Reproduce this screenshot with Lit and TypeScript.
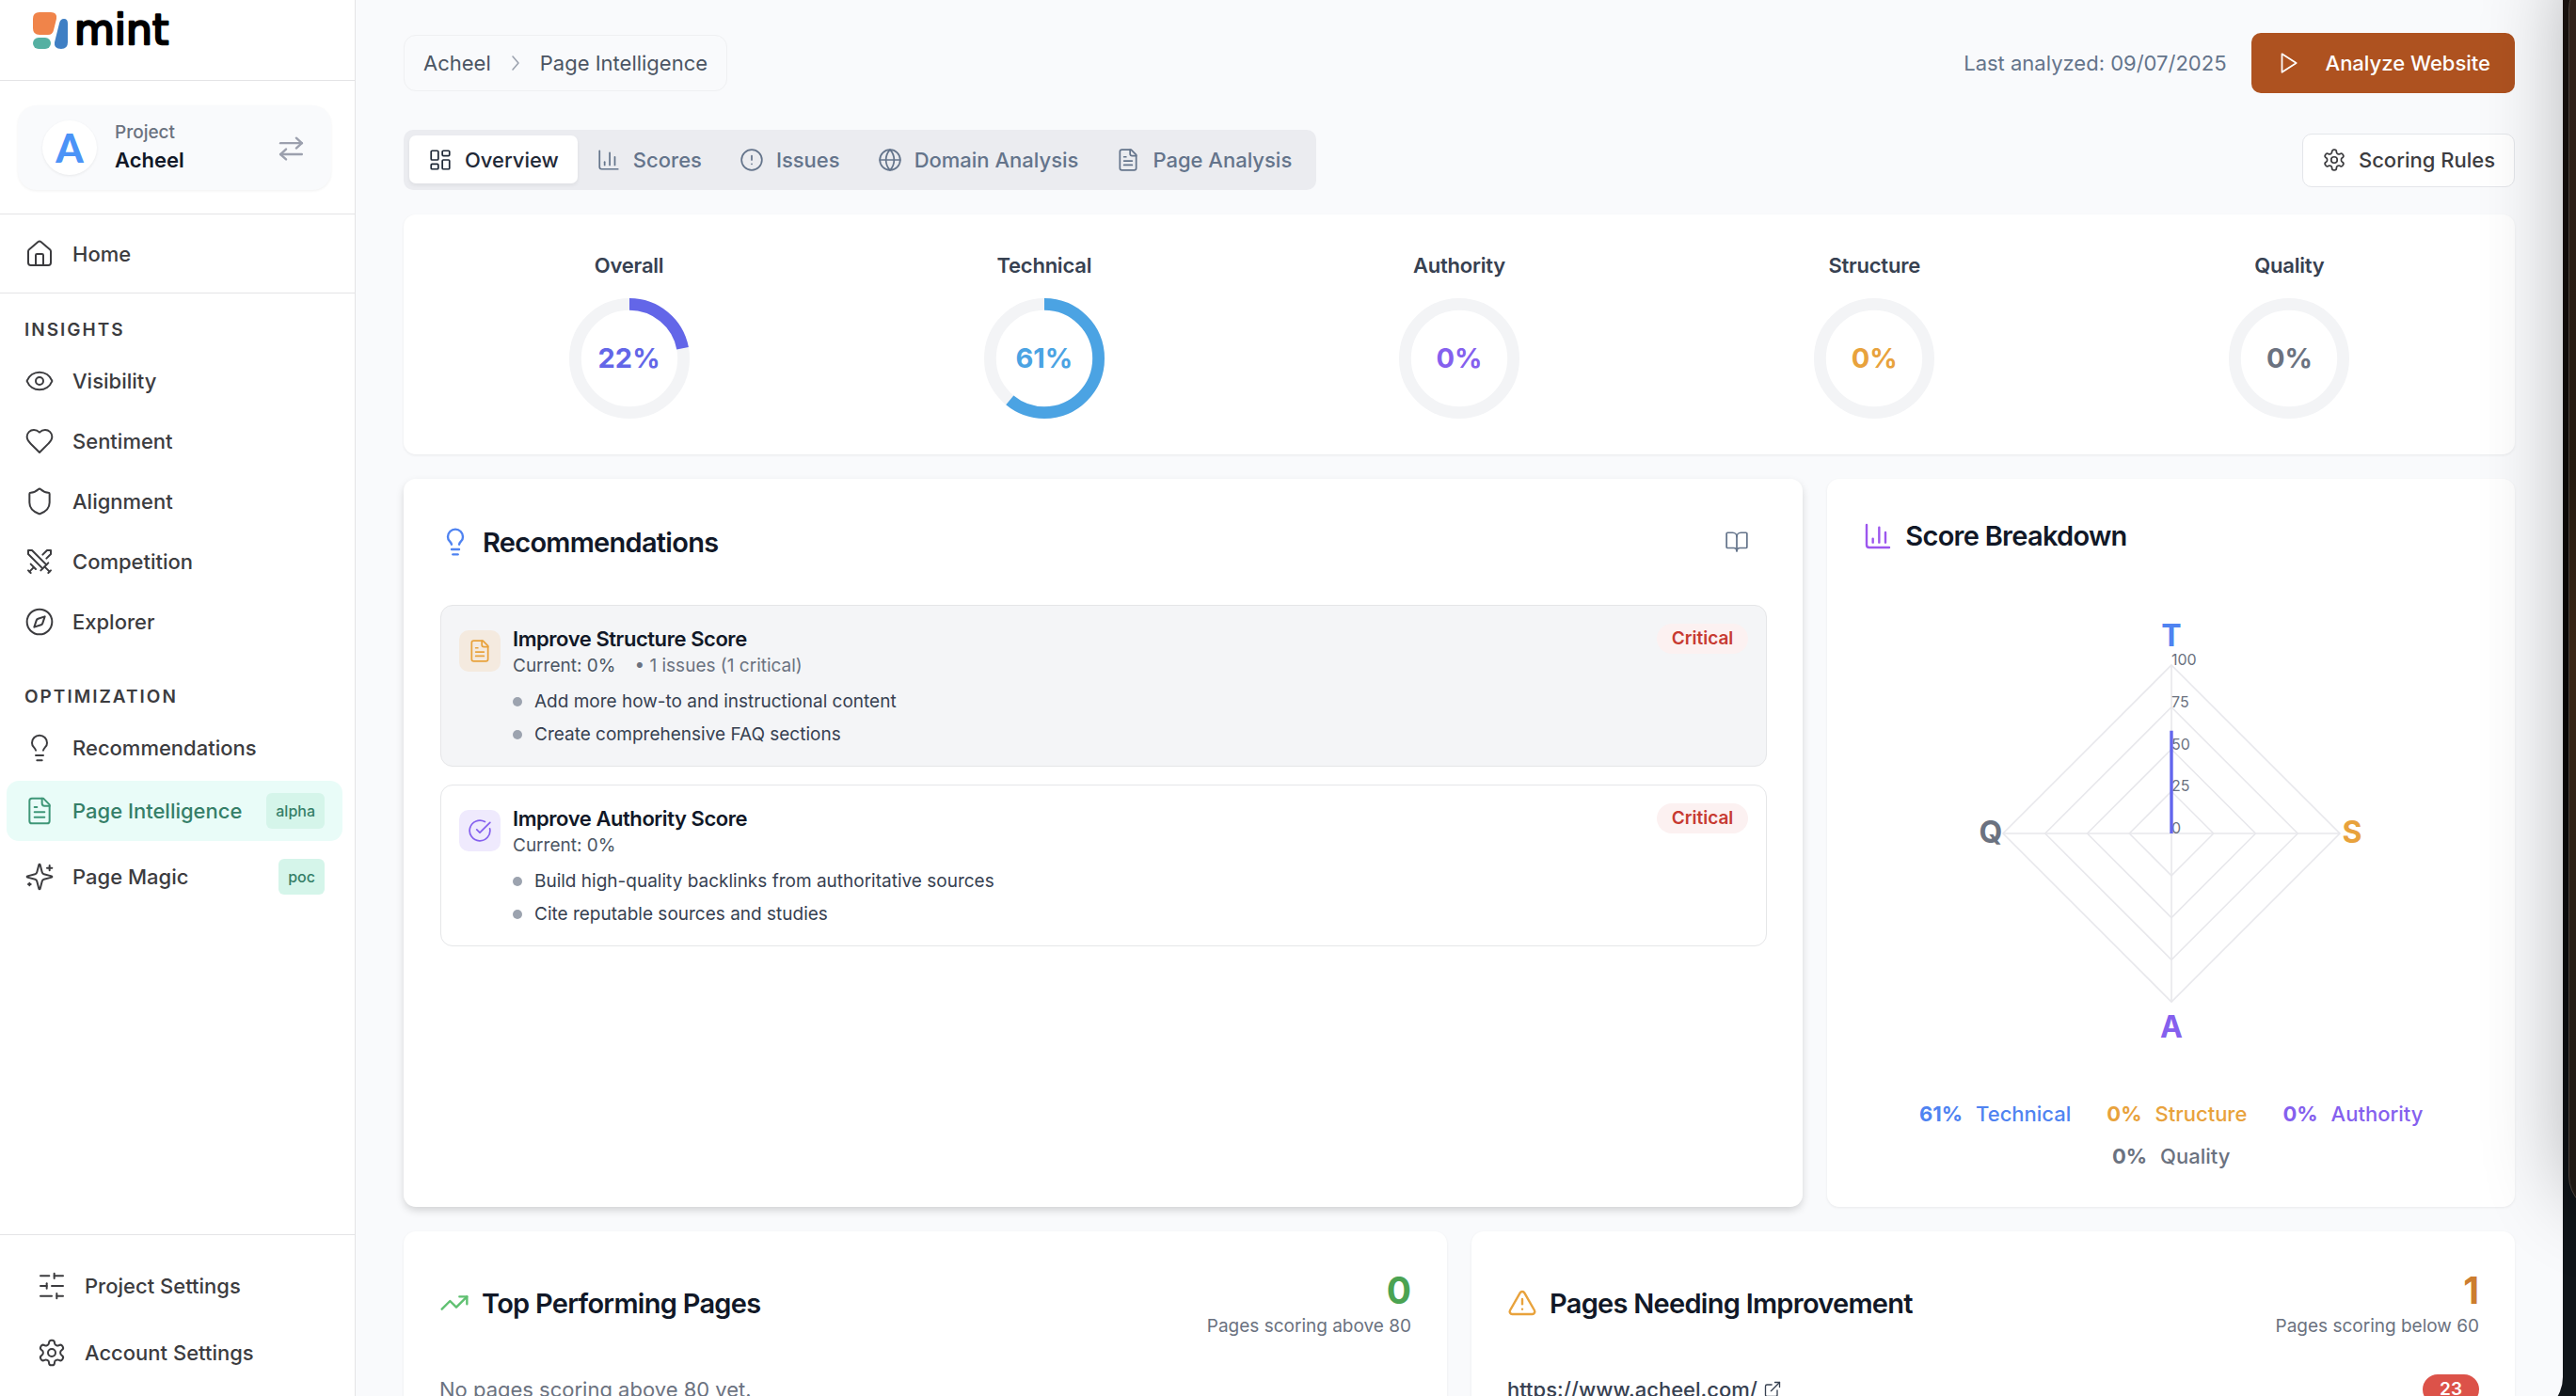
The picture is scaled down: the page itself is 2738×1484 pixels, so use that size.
import { LitElement, html, css, svg, nothing } from "lit";
import { customElement, property } from "lit/decorators.js";
import { classMap } from "lit/directives/class-map.js";

const ICONS: Record<string, string[]> = {
  home: [
    "M15 21v-8a1 1 0 0 0-1-1h-4a1 1 0 0 0-1 1v8",
    "M3 10a2 2 0 0 1 .709-1.528l7-5.999a2 2 0 0 1 2.582 0l7 5.999A2 2 0 0 1 21 10v9a2 2 0 0 1-2 2H5a2 2 0 0 1-2-2z",
  ],
  eye: [
    "M2.062 12.348a1 1 0 0 1 0-.696 10.75 10.75 0 0 1 19.876 0 1 1 0 0 1 0 .696 10.75 10.75 0 0 1-19.876 0",
    "M15 12a3 3 0 1 1-6 0 3 3 0 0 1 6 0z",
  ],
  heart: [
    "M19 14c1.49-1.46 3-3.21 3-5.5A5.5 5.5 0 0 0 16.5 3c-1.76 0-3 .5-4.5 2-1.5-1.5-2.74-2-4.5-2A5.5 5.5 0 0 0 2 8.5c0 2.3 1.5 4.05 3 5.5l7 7Z",
  ],
  shield: [
    "M20 13c0 5-3.5 7.5-7.66 8.95a1 1 0 0 1-.67-.01C7.5 20.5 4 18 4 13V6a1 1 0 0 1 1-1c2 0 4.5-1.2 6.24-2.72a1.17 1.17 0 0 1 1.52 0C14.51 3.81 17 5 19 5a1 1 0 0 1 1 1z",
  ],
  swords: [
    "M14.5 17.5 3 6V3h3l11.5 11.5",
    "M13 19l6-6",
    "M16 16l4 4",
    "M19 21l2-2",
    "M14.5 6.5 18 3h3v3l-3.5 3.5",
    "M5 14l4 4",
    "M7 17l-3 3",
    "M3 19l2 2",
  ],
  compass: [
    "M22 12a10 10 0 1 1-20 0 10 10 0 0 1 20 0z",
    "m16.24 7.76-1.804 5.411a2 2 0 0 1-1.265 1.265L7.76 16.24l1.804-5.411a2 2 0 0 1 1.265-1.265z",
  ],
  bulb: [
    "M15 14c.2-1 .7-1.7 1.5-2.5 1-.9 1.5-2.2 1.5-3.5A6 6 0 0 0 6 8c0 1 .2 2.2 1.5 3.5.7.7 1.3 1.5 1.5 2.5",
    "M9 18h6",
    "M10 22h4",
  ],
  file: [
    "M15 2H6a2 2 0 0 0-2 2v16a2 2 0 0 0 2 2h12a2 2 0 0 0 2-2V7Z",
    "M14 2v4a2 2 0 0 0 2 2h4",
    "M10 9H8",
    "M16 13H8",
    "M16 17H8",
  ],
  sparkles: [
    "M9.937 15.5A2 2 0 0 0 8.5 14.063l-6.135-1.582a.5.5 0 0 1 0-.962L8.5 9.936A2 2 0 0 0 9.937 8.5l1.582-6.135a.5.5 0 0 1 .963 0L14.063 8.5A2 2 0 0 0 15.5 9.937l6.135 1.581a.5.5 0 0 1 0 .964L15.5 14.063a2 2 0 0 0-1.437 1.437l-1.582 6.135a.5.5 0 0 1-.963 0z",
    "M20 3v4",
    "M22 5h-4",
    "M4 17v2",
    "M5 18H3",
  ],
  sliders: [
    "M21 4h-7",
    "M10 4H3",
    "M21 12h-9",
    "M8 12H3",
    "M21 20h-5",
    "M12 20H3",
    "M14 2v4",
    "M8 10v4",
    "M16 18v4",
  ],
  settings: [
    "M12.22 2h-.44a2 2 0 0 0-2 2v.18a2 2 0 0 1-1 1.73l-.43.25a2 2 0 0 1-2 0l-.15-.08a2 2 0 0 0-2.73.73l-.22.38a2 2 0 0 0 .73 2.73l.15.1a2 2 0 0 1 1 1.72v.51a2 2 0 0 1-1 1.74l-.15.09a2 2 0 0 0-.73 2.73l.22.38a2 2 0 0 0 2.73.73l.15-.08a2 2 0 0 1 2 0l.43.25a2 2 0 0 1 1 1.73V20a2 2 0 0 0 2 2h.44a2 2 0 0 0 2-2v-.18a2 2 0 0 1 1-1.73l.43-.25a2 2 0 0 1 2 0l.15.08a2 2 0 0 0 2.73-.73l.22-.39a2 2 0 0 0-.73-2.73l-.15-.08a2 2 0 0 1-1-1.74v-.5a2 2 0 0 1 1-1.74l.15-.09a2 2 0 0 0 .73-2.73l-.22-.38a2 2 0 0 0-2.73-.73l-.15.08a2 2 0 0 1-2 0l-.43-.25a2 2 0 0 1-1-1.73V4a2 2 0 0 0-2-2z",
    "M15 12a3 3 0 1 1-6 0 3 3 0 0 1 6 0z",
  ],
  swap: ["M1 7.5h21", "m16.5 2.5 5.5 5-5.5 5", "M22 18.5H1", "m6.5 13.5-5.5 5 5.5 5"],
  chevron: ["m9 5 6 7-6 7"],
  play: ["M6 3l14 9-14 9V3z"],
  dashboard: [
    "M4 3h5a1 1 0 0 1 1 1v7a1 1 0 0 1-1 1H4a1 1 0 0 1-1-1V4a1 1 0 0 1 1-1z",
    "M15 3h5a1 1 0 0 1 1 1v3a1 1 0 0 1-1 1h-5a1 1 0 0 1-1-1V4a1 1 0 0 1 1-1z",
    "M15 12h5a1 1 0 0 1 1 1v7a1 1 0 0 1-1 1h-5a1 1 0 0 1-1-1v-7a1 1 0 0 1 1-1z",
    "M4 16h5a1 1 0 0 1 1 1v3a1 1 0 0 1-1 1H4a1 1 0 0 1-1-1v-3a1 1 0 0 1 1-1z",
  ],
  chart: ["M3 3v16a2 2 0 0 0 2 2h16", "M18 17V9", "M13 17V5", "M8 17v-3"],
  alert: ["M22 12a10 10 0 1 1-20 0 10 10 0 0 1 20 0z", "M12 8v4", "M12 16h.01"],
  globe: [
    "M22 12a10 10 0 1 1-20 0 10 10 0 0 1 20 0z",
    "M12 2a14.5 14.5 0 0 0 0 20 14.5 14.5 0 0 0 0-20",
    "M2 12h20",
  ],
  book: [
    "M12 7v14",
    "M3 18a1 1 0 0 1-1-1V4a1 1 0 0 1 1-1h5a4 4 0 0 1 4 4 4 4 0 0 1 4-4h5a1 1 0 0 1 1 1v13a1 1 0 0 1-1 1h-6a3 3 0 0 0-3 3 3 3 0 0 0-3-3z",
  ],
  check: ["M21.801 10A10 10 0 1 1 17 3.335", "m9 11 3 3L22 4"],
  trend: ["M22 7l-8.5 8.5-5-5L2 17", "M16 7h6v6"],
  warning: [
    "m21.73 18-8-14a2 2 0 0 0-3.48 0l-8 14A2 2 0 0 0 4 21h16a2 2 0 0 0 1.73-3",
    "M12 9v4",
    "M12 17h.01",
  ],
  external: ["M15 3h6v6", "M10 14 21 3", "M18 13v6a2 2 0 0 1-2 2H5a2 2 0 0 1-2-2V8a2 2 0 0 1 2-2h6"],
};

@customElement("line-icon")
class LineIcon extends LitElement {
  @property() name = "home";
  static styles = css`
    :host { display: inline-flex; flex: none; width: 26px; height: 26px; }
    .icon { width: 100%; height: 100%; fill: none; stroke: currentColor; stroke-width: var(--stroke, 1.6); stroke-linecap: round; stroke-linejoin: round; overflow: visible; }
  `;
  render() {
    return html`<svg class="icon" viewBox="0 0 24 24" aria-hidden="true">${(ICONS[this.name] ?? []).map((d) => svg`<path d=${d}></path>`)}</svg>`;
  }
}

interface NavItem { icon: string; label: string; badge?: string; active?: boolean }

const INSIGHTS: NavItem[] = [
  { icon: "eye", label: "Visibility" },
  { icon: "heart", label: "Sentiment" },
  { icon: "shield", label: "Alignment" },
  { icon: "swords", label: "Competition" },
  { icon: "compass", label: "Explorer" },
];
const OPTIMIZATION: NavItem[] = [
  { icon: "bulb", label: "Recommendations" },
  { icon: "file", label: "Page Intelligence", badge: "alpha", active: true },
  { icon: "sparkles", label: "Page Magic", badge: "poc" },
];
const SETTINGS: NavItem[] = [
  { icon: "sliders", label: "Project Settings" },
  { icon: "settings", label: "Account Settings" },
];

@customElement("side-nav")
class SideNav extends LitElement {
  static styles = css`
    :host { display: flex; flex-direction: column; width: 377px; flex: none; height: 100vh; background: #fff; border-right: 1px solid #e4e4e6; color: #3c3c3f; font-size: 22px; line-height: 32px; font-weight: 500; }
    .brand { display: flex; align-items: flex-start; height: 72px; padding: 13px 35px 0; border-bottom: 1px solid #e4e4e6; }
    .brand-art { display: block; width: 156px; height: 42px; overflow: visible; }
    .wordmark { font: 400 44px "DejaVu Sans", sans-serif; fill: #000; stroke: #000; stroke-width: 2.4; stroke-linejoin: round; }
    .project { padding: 26px 25px 25px 19px; border-bottom: 1px solid #e4e4e6; }
    .switcher { display: flex; align-items: center; gap: 19px; width: 100%; height: 90px; padding: 0 29px 0 26px; border: 0; border-radius: 20px; background: #f9fafc; box-shadow: 0 1px 3px rgba(0, 0, 0, 0.06); font: inherit; text-align: left; box-sizing: border-box; }
    .avatar { display: grid; place-items: center; width: 58px; height: 58px; border-radius: 50%; background: #fff; box-shadow: 0 1px 3px rgba(0, 0, 0, 0.07); color: #4b93f7; font: 900 42px/58px Lato, sans-serif; }
    .names { display: flex; flex-direction: column; flex: 1; }
    .kind { color: #6b7280; font-size: 19px; line-height: 26px; }
    .name { color: #111827; font-weight: 600; line-height: 32px; }
    .swap { color: #9ca0ae; width: 26px; height: 26px; --stroke: 2.2; }
    .home { padding: 13px 13px 12px 7px; border-bottom: 1px solid #e4e4e6; }
    .section { display: flex; flex-direction: column; gap: 6px; padding: 0 13px 0 7px; }
    .label { margin: 0 0 6px; padding-left: 19px; font-size: 19px; line-height: 26px; font-weight: 600; letter-spacing: 2px; }
    .insights { padding-top: 26px; }
    .optimization { padding-top: 38px; }
    .row { display: flex; align-items: center; gap: 19px; padding: 13px 19px; border-radius: 13px; color: inherit; text-decoration: none; }
    .row line-icon { width: 32px; height: 32px; --stroke: 1.5; }
    .text { flex: 1; white-space: nowrap; }
    .active { background: #e9fcf8; color: #357f68; }
    .active line-icon { color: #3f9778; }
    .badge { padding: 6px 10px; border-radius: 6px; background: #d5f5ea; color: #357f68; font-size: 16px; line-height: 26px; }
    .footer { display: flex; flex-direction: column; gap: 13px; margin-top: auto; padding: 25px 20px 17px; border-top: 1px solid #e4e4e6; }
  `;
  private row(item: NavItem) {
    return html`<a class=${classMap({ row: true, active: !!item.active })} href="#" aria-current=${item.active ? "page" : nothing}>
      <line-icon name=${item.icon}></line-icon><span class="text">${item.label}</span>
      ${item.badge ? html`<span class="badge">${item.badge}</span>` : nothing}
    </a>`;
  }
  render() {
    return html`
      <div class="brand">
        <svg class="brand-art" viewBox="0 0 156 42" role="img" aria-label="mint">
          <path fill="#f0844a" d="M7 0h12q7 0 6 7l-3 12q-1 5-6 5H7q-7 0-7-7V7q0-7 7-7z"></path>
          <path fill="#3f7fc4" d="M28 12q1-5 5-5 4 0 4 5v20q0 7-7 7-8 0-7-7z"></path>
          <rect fill="#55b0a2" y="27" width="19" height="12" rx="6"></rect>
          <text class="wordmark" x="44" y="34">mint</text>
        </svg>
      </div>
      <div class="project">
        <button class="switcher" type="button">
          <span class="avatar">A</span>
          <span class="names"><span class="kind">Project</span><span class="name">Acheel</span></span>
          <line-icon class="swap" name="swap"></line-icon>
        </button>
      </div>
      <div class="home">${this.row({ icon: "home", label: "Home" })}</div>
      <nav class="section insights"><h2 class="label">INSIGHTS</h2>${INSIGHTS.map((i) => this.row(i))}</nav>
      <nav class="section optimization"><h2 class="label">OPTIMIZATION</h2>${OPTIMIZATION.map((i) => this.row(i))}</nav>
      <nav class="footer">${SETTINGS.map((i) => this.row(i))}</nav>
    `;
  }
}

@customElement("score-ring")
class ScoreRing extends LitElement {
  @property() label = "";
  @property({ type: Number }) value = 0;
  @property() color = "#000";
  static styles = css`
    :host { display: flex; flex-direction: column; align-items: center; gap: 19px; }
    .title { margin: 0; color: #374151; font-size: 22px; line-height: 32px; font-weight: 600; letter-spacing: -0.01em; }
    .ring { display: grid; place-items: center; width: 128px; height: 128px; }
    .ring > * { grid-area: 1 / 1; }
    .dial { width: 128px; height: 128px; fill: none; stroke-width: 8; }
    .track { stroke: #f3f4f6; }
    .value { font-size: 29px; line-height: 38px; font-weight: 700; }
  `;
  render() {
    return html`
      <h3 class="title">${this.label}</h3>
      <div class="ring">
        <svg class="dial" viewBox="0 0 80 80" aria-hidden="true">
          <circle class="track" cx="40" cy="40" r="36"></circle>
          ${this.value > 0
            ? svg`<circle cx="40" cy="40" r="36" pathLength="100" stroke=${this.color} stroke-dasharray="${this.value} 100" transform="rotate(-90 40 40)"></circle>`
            : nothing}
        </svg>
        <span class="value" style="color:${this.color}">${this.value}%</span>
      </div>
    `;
  }
}

@customElement("radar-chart")
class RadarChart extends LitElement {
  static styles = css`
    :host { display: flex; justify-content: center; }
    .plot { display: block; width: 654px; max-width: 100%; height: 512px; font-family: Inter, sans-serif; overflow: visible; }
    .grid { fill: none; stroke: #e8e8ec; stroke-width: 1.6; }
    .series { fill: rgba(99, 102, 241, 0.3); stroke: #6366ee; stroke-width: 3.4; }
    .tick { fill: #6b7280; font-size: 16px; }
    .axis { font-size: 32px; font-weight: 700; text-anchor: middle; }
  `;
  render() {
    const r = 179;
    const diamond = (k: number) => `M0 ${-k * r}L${k * r} 0L0 ${k * r}L${-k * r} 0Z`;
    return html`<svg class="plot" viewBox="-327 -256 654 512" role="img" aria-label="Score breakdown by category">
      ${[0.25, 0.5, 0.75, 1].map((k) => svg`<path class="grid" d=${diamond(k)}></path>`)}
      <path class="grid" d="M0 ${-r}V${r}M${-r} 0H${r}"></path>
      ${[0, 25, 50, 75, 100].map((t) => svg`<text class="tick" x="0" y=${-t * r / 100}>${t}</text>`)}
      <path class="series" d="M0 ${-0.61 * r}L0 0Z"></path>
      <text class="axis" x="0" y="-199" fill="#4f83f1">T</text>
      <text class="axis" x="192" y="10" fill="#e8a23c">S</text>
      <text class="axis" x="0" y="217" fill="#8560ee">A</text>
      <text class="axis" x="-192" y="10" fill="#6b7280">Q</text>
    </svg>`;
  }
}

const TABS = [
  { icon: "dashboard", label: "Overview", active: true },
  { icon: "chart", label: "Scores" },
  { icon: "alert", label: "Issues" },
  { icon: "globe", label: "Domain Analysis" },
  { icon: "file", label: "Page Analysis" },
];
const SCORES = [
  { label: "Overall", value: 22, color: "#6366e8" },
  { label: "Technical", value: 61, color: "#4ba3e3" },
  { label: "Authority", value: 0, color: "#8560ee" },
  { label: "Structure", value: 0, color: "#e8a23c" },
  { label: "Quality", value: 0, color: "#6b7280" },
];
const LEGEND = [
  { label: "Technical", value: 61, color: "#4f83f1" },
  { label: "Structure", value: 0, color: "#e8a23c" },
  { label: "Authority", value: 0, color: "#8560ee" },
  { label: "Quality", value: 0, color: "#6b7280" },
];
const RECOMMENDATIONS = [
  { title: "Improve Structure Score", icon: "file", tone: "amber", issues: "• 1 issues (1 critical)", hovered: true, tips: ["Add more how-to and instructional content", "Create comprehensive FAQ sections"] },
  { title: "Improve Authority Score", icon: "check", tone: "violet", issues: "", hovered: false, tips: ["Build high-quality backlinks from authoritative sources", "Cite reputable sources and studies"] },
];

@customElement("app-root")
class AppRoot extends LitElement {
  static styles = css`
    :host { display: block; font-family: Inter, "Noto Sans", sans-serif; font-size: 22px; line-height: 32px; }
    .desktop { position: relative; height: 100vh; overflow: hidden; background: linear-gradient(#1b1410, #0a0806 50%, #10161a 90%); }
    .window { display: flex; height: calc(100vh + 20px); margin-right: 14px; overflow: hidden; border-bottom-right-radius: 40px; background: #f9fafc; }
    .behind { position: absolute; left: calc(100% - 8px); top: -30px; bottom: 194px; width: 400px; box-sizing: border-box; border: 1px solid #4a423c; border-radius: 40px; background: linear-gradient(#33231c, #241a10 40%, #3a2616 55%, #261e16 80%, #1d1814); box-shadow: 0 -16px 90px rgba(0, 0, 0, 0.3); }
    .main { display: flex; flex-direction: column; flex: 1; min-width: 0; padding: 35px 51px 0; }
    .bar { display: flex; align-items: center; justify-content: space-between; }
    .crumbs { display: flex; align-items: center; gap: 14px; padding: 13px 20px; border: 1px solid #eff0f2; border-radius: 13px; color: #4b5563; }
    .crumbs a { color: inherit; text-decoration: none; }
    .crumbs line-icon { width: 24px; height: 24px; color: #9ca3af; }
    .actions { display: flex; align-items: center; gap: 26px; color: #64748b; }
    .analyze { display: flex; align-items: center; gap: 27px; height: 64px; padding: 0 26px; border: 0; border-radius: 10px; background: #ae5220; color: #fff; font: inherit; font-weight: 500; }
    .tabs-bar { margin-top: 39px; }
    .tabs { display: flex; padding: 6px 6px 7px; border-radius: 10px; background: #ebecf0; }
    .tab { display: flex; align-items: center; gap: 13px; height: 51px; padding: 0 20px; border: 0; border-radius: 7px; background: none; color: #64748b; font: inherit; font-weight: 500; }
    .selected { background: #fff; color: #1f2937; box-shadow: 0 2px 4px rgba(0, 0, 0, 0.06); }
    .rules { display: flex; align-items: center; gap: 13px; height: 57px; padding: 0 20px; border: 1px solid #e4e6ea; border-radius: 10px; background: #fff; color: #3c3c3f; font: inherit; font-weight: 500; }
    .card { border-radius: 13px; background: #fff; box-shadow: 0 1px 3px rgba(0, 0, 0, 0.07); padding: 38px; }
    .scores { display: grid; grid-template-columns: repeat(5, 1fr); gap: 38px; margin-top: 26px; }
    .middle { display: grid; grid-template-columns: repeat(3, minmax(0, 1fr)); gap: 26px; margin-top: 26px; }
    .wide { grid-column: span 2; box-shadow: 0 4px 10px -1px rgba(0, 0, 0, 0.18); padding-left: 39px; }
    .head { display: flex; align-items: center; justify-content: space-between; }
    .title { display: flex; align-items: center; gap: 13px; margin: 0; color: #111827; font-size: 29px; line-height: 45px; font-weight: 600; letter-spacing: -0.025em; }
    .title line-icon { width: 32px; height: 32px; --stroke: 1.8; }
    .blue { color: #4f83f1; }
    .purple { color: #9c56ee; }
    .green { color: #5fc071; }
    .orange { color: #e8a23c; }
    .guide { display: flex; padding: 16px 19px; border: 0; background: none; color: #64748b; }
    .recs { display: flex; flex-direction: column; gap: 19px; margin: 38px 0 0; padding: 0; list-style: none; }
    .rec { display: flex; align-items: flex-start; gap: 13px; padding: 19px; border: 1px solid #e5e6e8; border-radius: 13px; font-size: 19px; line-height: 26px; color: #4b5563; }
    .hovered { background: #f4f5f7; }
    .tile { display: grid; place-items: center; width: 44px; height: 44px; margin-top: 7px; border-radius: 10px; }
    .amber { background: #f4eadf; color: #e8a23c; }
    .violet { background: #efeafd; color: #8560ee; }
    .body { flex: 1; }
    .rec-title { margin: 0; color: #111827; font-size: 22px; line-height: 32px; font-weight: 600; letter-spacing: -0.02em; }
    .stats { display: flex; gap: 20px; }
    .issues { color: #6b7280; }
    .tips { display: flex; flex-direction: column; gap: 6px; margin: 10px 0 0; padding: 0; list-style: none; color: #374151; line-height: 29px; }
    .tip { display: flex; align-items: center; gap: 13px; }
    .tip::before { content: ""; width: 10px; height: 10px; border-radius: 50%; background: #9ca3af; }
    .critical { padding: 3px 16px; border-radius: 16px; background: #fcf1f1; color: #c73a31; font-weight: 600; }
    .chart { margin-top: 38px; }
    .legend { display: flex; flex-wrap: wrap; justify-content: center; gap: 13px 38px; margin: 26px 0 0; padding: 0; list-style: none; font-weight: 500; }
    .legend-item { display: flex; gap: 14px; }
    .percent { font-weight: 700; }
    .bottom { display: grid; grid-template-columns: repeat(2, minmax(0, 1fr)); gap: 26px; margin-top: 26px; }
    .tally { display: flex; flex-direction: column; align-items: flex-end; color: #6b7280; font-size: 19px; line-height: 26px; }
    .count { font-size: 39px; line-height: 50px; font-weight: 700; }
    .good { color: #4ba352; }
    .poor { color: #cc7d2f; }
    .bottom-row { display: flex; align-items: center; justify-content: space-between; margin: 38px 0 0; color: #6b7280; }
    .page-link { display: flex; align-items: center; gap: 6px; color: #374151; text-decoration: none; font-weight: 500; }
    .page-link line-icon { width: 20px; height: 20px; }
    .score-pill { padding: 3px 18px; border-radius: 16px; background: #dc5249; color: #fff; font-size: 19px; line-height: 26px; font-weight: 600; }
  `;
  render() {
    return html`
      <div class="desktop">
        <div class="window">
          <side-nav></side-nav>
          <main class="main">
            <header class="bar">
              <nav class="crumbs" aria-label="Breadcrumb">
                <a href="#">Acheel</a><line-icon name="chevron"></line-icon><span>Page Intelligence</span>
              </nav>
              <div class="actions">
                <span>Last analyzed: 09/07/2025</span>
                <button class="analyze" type="button"><line-icon name="play"></line-icon>Analyze Website</button>
              </div>
            </header>
            <div class="bar tabs-bar">
              <div class="tabs" role="tablist">
                ${TABS.map((t) => html`<button type="button" role="tab" aria-selected=${t.active ? "true" : "false"} class=${classMap({ tab: true, selected: !!t.active })}><line-icon name=${t.icon}></line-icon>${t.label}</button>`)}
              </div>
              <button class="rules" type="button"><line-icon name="settings"></line-icon>Scoring Rules</button>
            </div>
            <section class="card scores">
              ${SCORES.map((s) => html`<score-ring label=${s.label} .value=${s.value} color=${s.color}></score-ring>`)}
            </section>
            <div class="middle">
              <section class="card wide">
                <div class="head">
                  <h2 class="title"><line-icon class="blue" name="bulb"></line-icon>Recommendations</h2>
                  <button class="guide" type="button" aria-label="Open guide"><line-icon name="book"></line-icon></button>
                </div>
                <ul class="recs">
                  ${RECOMMENDATIONS.map((r) => html`<li class=${classMap({ rec: true, hovered: r.hovered })}>
                    <span class="tile ${r.tone}"><line-icon name=${r.icon}></line-icon></span>
                    <div class="body">
                      <h3 class="rec-title">${r.title}</h3>
                      <div class="stats"><span>Current: 0%</span>${r.issues ? html`<span class="issues">${r.issues}</span>` : nothing}</div>
                      <ul class="tips">${r.tips.map((t) => html`<li class="tip">${t}</li>`)}</ul>
                    </div>
                    <span class="critical">Critical</span>
                  </li>`)}
                </ul>
              </section>
              <section class="card">
                <h2 class="title"><line-icon class="purple" name="chart"></line-icon>Score Breakdown</h2>
                <radar-chart class="chart"></radar-chart>
                <ul class="legend">
                  ${LEGEND.map((l) => html`<li class="legend-item" style="color:${l.color}"><span class="percent">${l.value}%</span><span>${l.label}</span></li>`)}
                </ul>
              </section>
            </div>
            <div class="bottom">
              <section class="card">
                <div class="head">
                  <h2 class="title"><line-icon class="green" name="trend"></line-icon>Top Performing Pages</h2>
                  <div class="tally"><span class="count good">0</span><span>Pages scoring above 80</span></div>
                </div>
                <p class="bottom-row">No pages scoring above 80 yet.</p>
              </section>
              <section class="card">
                <div class="head">
                  <h2 class="title"><line-icon class="orange" name="warning"></line-icon>Pages Needing Improvement</h2>
                  <div class="tally"><span class="count poor">1</span><span>Pages scoring below 60</span></div>
                </div>
                <div class="bottom-row">
                  <a class="page-link" href="https://www.acheel.com/">https://www.acheel.com/<line-icon name="external"></line-icon></a>
                  <span class="score-pill">23</span>
                </div>
              </section>
            </div>
          </main>
        </div>
        <div class="behind"></div>
      </div>
    `;
  }
}
